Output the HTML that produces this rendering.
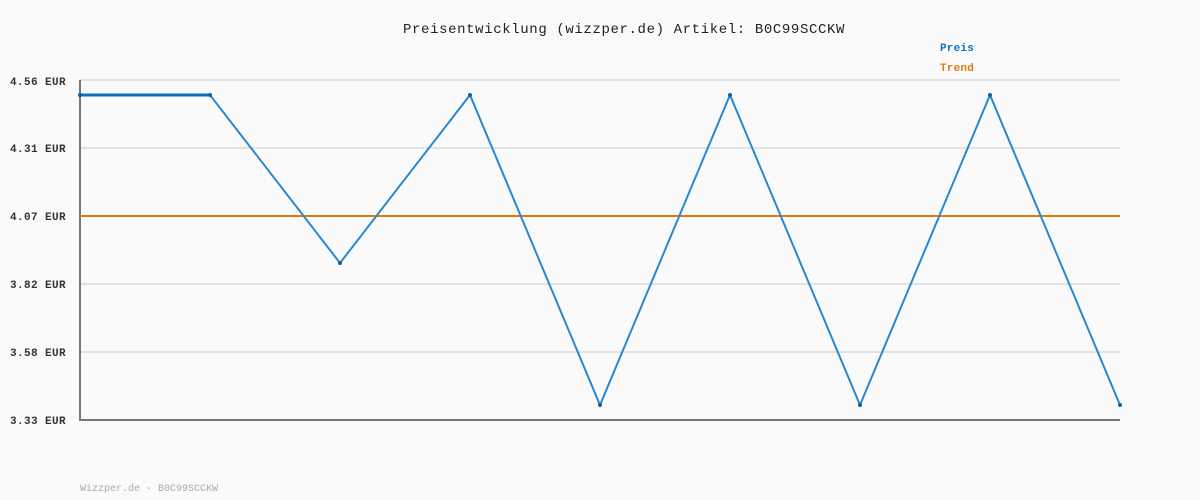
<!DOCTYPE html>
<html><head><style>
body{margin:0;background:#fafafa;overflow:hidden;}
svg{display:block;}
svg text{font-family:"Liberation Mono","DejaVu Sans Mono",monospace;}
</style></head><body>
<svg width="1200" height="500" xmlns="http://www.w3.org/2000/svg">
<rect width="1200" height="500" fill="#fafafa"/>
<text x="403" y="33" font-size="14" letter-spacing="0.62" fill="#222">Preisentwicklung (wizzper.de) Artikel: B0C99SCCKW</text>
<text x="940" y="51" font-size="11" font-weight="bold" letter-spacing="0.2" fill="#0a74c4">Preis</text>
<text x="940" y="71" font-size="11" font-weight="bold" letter-spacing="0.2" fill="#e07a10">Trend</text>
<g stroke="#e2e2e2" stroke-width="2">
<line x1="80" y1="80" x2="1120" y2="80"/>
<line x1="80" y1="148" x2="1120" y2="148"/>
<line x1="80" y1="216" x2="1120" y2="216"/>
<line x1="80" y1="284" x2="1120" y2="284"/>
<line x1="80" y1="352" x2="1120" y2="352"/>
</g>
<g font-size="11" font-weight="bold" letter-spacing="0.4" fill="#333">
<text x="10" y="85">4.56 EUR</text>
<text x="10" y="152">4.31 EUR</text>
<text x="10" y="220">4.07 EUR</text>
<text x="10" y="288">3.82 EUR</text>
<text x="10" y="356">3.58 EUR</text>
<text x="10" y="424">3.33 EUR</text>
</g>
<path d="M80 80V420H1120" fill="none" stroke="#777" stroke-width="2"/>
<line x1="80" y1="216" x2="1120" y2="216" stroke="#e07a10" stroke-width="2"/>
<polyline points="80,95 210,95 340,263 470,95 600,405 730,95 860,405 990,95 1120,405" fill="none" stroke="#2a88d0" stroke-width="2"/>
<line x1="80" y1="95" x2="210" y2="95" stroke="#0a74c4" stroke-width="3"/>
<g fill="#0a64a8">
<circle cx="80" cy="95" r="2"/><circle cx="210" cy="95" r="2"/><circle cx="340" cy="263" r="2"/><circle cx="470" cy="95" r="2"/><circle cx="600" cy="405" r="2"/><circle cx="730" cy="95" r="2"/><circle cx="860" cy="405" r="2"/><circle cx="990" cy="95" r="2"/><circle cx="1120" cy="405" r="2"/>
</g>
<text x="80" y="491" font-size="10" fill="#aaa">Wizzper.de - B0C99SCCKW</text>
</svg>
</body></html>
